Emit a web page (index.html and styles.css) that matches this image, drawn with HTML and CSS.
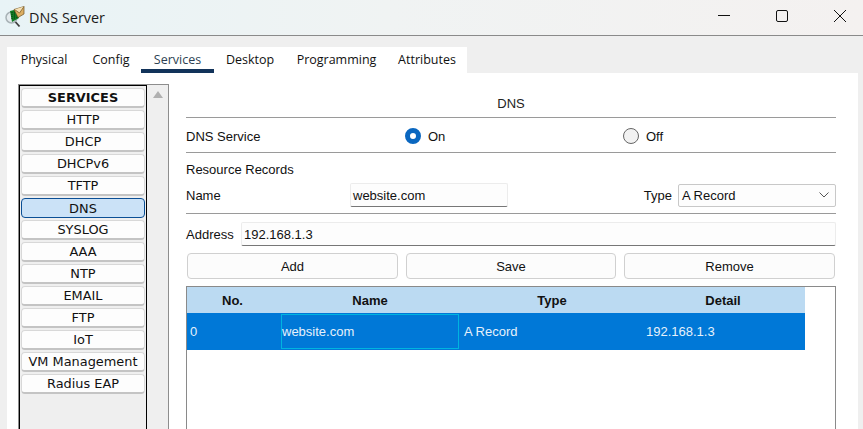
FILE: index.html
```html
<!DOCTYPE html>
<html lang="en">
<head>
<meta charset="utf-8">
<title>DNS Server</title>
<link rel="stylesheet" href="styles.css">
</head>
<body>
<div class="window">
  <header class="titlebar">
    <svg class="app-icon" width="22" height="22" viewBox="0 0 22 22">
      <circle cx="7.500" cy="11.500" r="5.500" fill="#e4ebee" stroke="#a8b2b6" stroke-width="1.500"/>
      <path d="M11.500 16l4 4.500" stroke="#3c3c3c" stroke-width="1.800"/>
      <path d="M6 5l8-2 1 9-7 4z" fill="#0f7a22"/>
      <path d="M8 6v8M10.500 5.500v8M13 5v7" stroke="#063d10" stroke-width="1" stroke-dasharray="1 1"/>
      <path d="M10 3.500l10-3v7.500l-6 3.500z" fill="#dcae62" stroke="#6e5122" stroke-width=".7"/>
      <path d="M10.500 3.500l5 3.500 4.500-6.500" fill="#f4e0b4" stroke="#6e5122" stroke-width=".7"/>
    </svg>
    <span class="app-title">DNS Server</span>
    <div class="window-controls">
      <svg width="14" height="14" viewBox="0 0 14 14"><path d="M1 6.500h12" stroke="#111" stroke-width="1"/></svg>
      <svg width="14" height="14" viewBox="0 0 14 14"><rect x="1.500" y="1.500" width="11" height="11" rx="1.500" fill="none" stroke="#111" stroke-width="1"/></svg>
      <svg width="14" height="14" viewBox="0 0 14 14"><path d="M1 1l12 12M13 1L1 13" stroke="#111" stroke-width="1"/></svg>
    </div>
  </header>
  <main class="frame">
    <nav class="tabs">
      <span class="tab">Physical</span>
      <span class="tab">Config</span>
      <span class="tab active">Services</span>
      <span class="tab">Desktop</span>
      <span class="tab">Programming</span>
      <span class="tab">Attributes</span>
    </nav>
    <div class="content">
      <aside class="sidebar">
        <div class="service-list">
          <div class="service heading">SERVICES</div>
          <div class="service">HTTP</div>
          <div class="service">DHCP</div>
          <div class="service">DHCPv6</div>
          <div class="service">TFTP</div>
          <div class="service selected">DNS</div>
          <div class="service">SYSLOG</div>
          <div class="service">AAA</div>
          <div class="service">NTP</div>
          <div class="service">EMAIL</div>
          <div class="service">FTP</div>
          <div class="service">IoT</div>
          <div class="service">VM Management</div>
          <div class="service">Radius EAP</div>
        </div>
        <div class="scrolltrack"><span class="scroll-up"></span></div>
      </aside>
      <section class="panel">
        <h1 class="panel-title">DNS</h1>
        <div class="row service-row">
          <span class="service-label">DNS Service</span>
          <span class="radio-group on-group"><span class="radio checked"></span>On</span>
          <span class="radio-group"><span class="radio"></span>Off</span>
        </div>
        <div class="records">
          <div class="records-title">Resource Records</div>
          <div class="row name-row">
            <span class="name-label">Name</span>
            <span class="text-input name-input">website.com</span>
            <span class="type-label">Type</span>
            <span class="select">A Record
              <svg width="10" height="6" viewBox="0 0 10 6"><path d="M.5.500l4.500 4.500 4.500-4.500" fill="none" stroke="#555" stroke-width="1"/></svg>
            </span>
          </div>
        </div>
        <div class="row address-row">
          <span class="address-label">Address</span>
          <span class="text-input address-input">192.168.1.3</span>
        </div>
        <div class="actions">
          <button class="action">Add</button>
          <button class="action">Save</button>
          <button class="action">Remove</button>
        </div>
        <div class="table">
          <div class="table-row table-head">
            <span class="head-no">No.</span><span>Name</span><span class="head-type">Type</span><span>Detail</span>
          </div>
          <div class="table-row table-selected">
            <span class="cell">0</span>
            <span class="cell focus">website.com</span>
            <span class="cell type-cell">A Record</span>
            <span class="cell detail-cell">192.168.1.3</span>
          </div>
        </div>
      </section>
    </div>
  </main>
</div>
</body>
</html>
```

FILE: styles.css
```css
* { box-sizing: border-box; }
html, body { margin: 0; height: 429px; overflow: hidden; }
body { background: #efefef; color: #111; font-family: "Liberation Sans", Arial, sans-serif; font-size: 13px; }
.window { height: 429px; display: flex; flex-direction: column; }

.titlebar {
  height: 36px; flex: none; display: flex; align-items: center; padding-left: 4px;
  background: linear-gradient(90deg, #e8f3f6 0%, #f0f3f3 45%, #f4f1f0 100%);
  border-bottom: 1px solid #8a8a8a;
}
.app-icon { flex: none; margin-top: -1px; }
.app-title { margin-left: 3px; font-family: "Open Sans", sans-serif; font-size: 14.400px; color: #1a1a1a; }
.window-controls { margin-left: auto; display: flex; gap: 44px; padding-right: 16px; margin-top: -3px; }

.frame { flex: 1; min-height: 0; margin: 11px 5px 0 7px; display: flex; flex-direction: column; }
.tabs { width: 460px; height: 26px; flex: none; display: grid; grid-template-columns: 74px 60px 73px 72px 101px 80px; padding-top: 4px; background: #fff; }
.tab { height: 22px; font-family: "Open Sans", sans-serif; font-size: 12.500px; line-height: 18px; text-align: center; color: #111; white-space: nowrap; }
.tab.active { border-bottom: 4px solid #12335a; color: #2c3f52; }

.content { flex: 1; min-height: 0; display: flex; padding: 11px 0 0 11px; background: #fff; }
.sidebar { width: 151px; flex: none; display: flex; background: #efefef; border: 1px solid #8d8d8d; border-bottom: 0; }
.service-list { width: 128px; flex: none; border: 1px solid #000; border-bottom: 0; padding: 2px 1px; display: flex; flex-direction: column; gap: 2px; }
.service {
  height: 20px; border: 1px solid #d8d8d8; border-bottom: 2px solid #c4c4c4; border-radius: 4px; background: #fdfdfd;
  font-family: "DejaVu Sans", sans-serif; font-size: 12.900px; line-height: 18px; text-align: center; color: #111; white-space: nowrap;
}
.service.heading { font-weight: 700; }
.service.selected { background: #cbe2f7; border: 1px solid #0b4f95; line-height: 20px; }
.scrolltrack { flex: 1; display: flex; justify-content: center; padding-top: 6px; }
.scroll-up { width: 0; height: 0; border: 5px solid transparent; border-top: 0; border-bottom: 7px solid #b0b0b0; }

.panel { flex: 1; min-width: 0; padding: 0 22px 0 17px; display: flex; flex-direction: column; }
.panel-title { margin: 0; height: 34px; padding-top: 12px; font-size: 13px; font-weight: 400; line-height: 15px; text-align: center; border-bottom: 1px solid #9a9a9a; color: #222; }
.row { display: flex; align-items: center; }
.service-row { height: 35px; padding-top: 2px; border-bottom: 1px solid #9a9a9a; }
.service-label { width: 219px; }
.radio-group { display: flex; align-items: center; gap: 7px; }
.on-group { width: 218px; }
.radio { width: 16px; height: 16px; border-radius: 50%; border: 1px solid #666; background: #f2f2f2; }
.radio.checked { border: 5px solid #0a67c0; background: #fff; }
.records { height: 61px; border-bottom: 1px solid #9a9a9a; }
.records-title { height: 30px; padding-top: 9px; line-height: 15px; }
.name-row { height: 24px; }
.name-label { width: 164px; }
.text-input { display: block; height: 24px; background: #fdfdfd; border: 1px solid #ececec; border-bottom: 1px solid #777; border-radius: 2px; line-height: 23px; padding-left: 2px; }
.name-input { width: 158px; }
.type-label { margin-left: auto; margin-right: 6px; }
.select { width: 158px; height: 23px; display: flex; align-items: center; justify-content: space-between; padding: 0 6px 0 3px; background: #fdfdfd; border: 1px solid #c8c8c8; border-radius: 2px; }
.address-row { height: 39px; padding-top: 1px; }
.address-label { width: 55px; }
.address-input { flex: 1; }
.actions { display: grid; grid-template-columns: 211px 210px 211px; gap: 8px; padding-left: 1px; height: 26px; }
.action { border: 1px solid #d0d0d0; border-radius: 4px; background: #fcfcfc; font: inherit; color: #111; padding: 0; }
.table { flex: 1; margin-top: 7px; border: 1px solid #8a8a8a; border-bottom: 0; }
.table-row { width: 618px; display: grid; grid-template-columns: 94px 178px 182px 164px; }
.table-head { height: 26px; background: #bbdaf2; font-weight: 700; text-align: center; line-height: 27px; color: #111; }
.head-no { padding-right: 3px; }
.head-type { padding-left: 4px; }
.table-selected { height: 37px; background: #0078d7; color: #e6f1fb; line-height: 37px; }
.cell { padding-left: 3px; }
.cell.focus { padding-left: 0; margin: 1px 0; border: 1px solid #00b4e0; line-height: 33px; }
.type-cell { padding-left: 5px; }
.detail-cell { padding-left: 5px; }
```
